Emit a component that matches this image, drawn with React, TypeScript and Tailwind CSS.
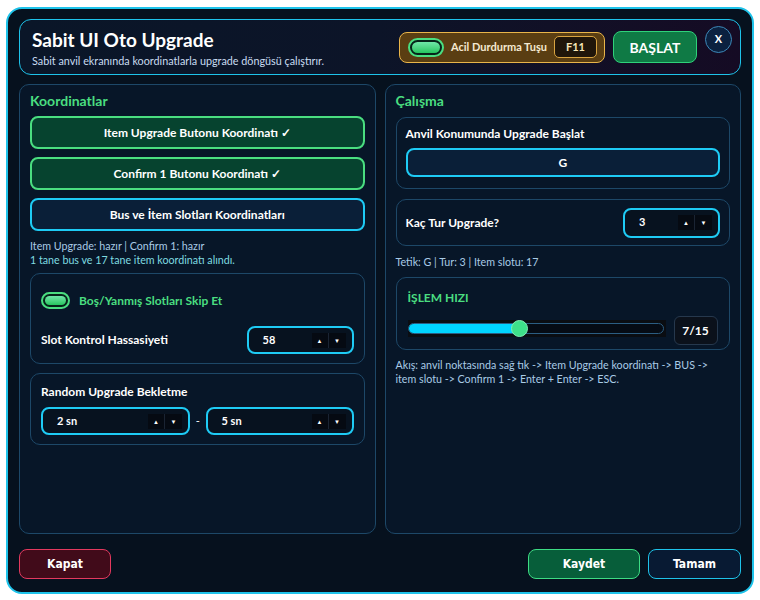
import React from "react";

const font = { fontFamily: "Lato, 'Noto Sans', sans-serif" };

function Toggle({ big }: { big?: boolean }) {
    return (
        <div
            className={`${big ? "w-[36px] h-[19px]" : "w-[29px] h-[17px]"} rounded-full border-2 border-[#4ade80] bg-[#06241a] p-[2px] flex`}
        >
            <div className="flex-1 rounded-full bg-gradient-to-b from-[#6ee7a8] to-[#22c55e]" />
        </div>
    );
}

function Spin({ value, className }: { value: string; className?: string }) {
    return (
        <div
            className={`h-[28px] rounded-[8px] border-2 border-[#1ecbf5] bg-[#07121f] flex items-center pl-[14px] pr-[6px] ${className ?? ""}`}
        >
            <span className="flex-1 text-[11px] font-bold text-white">{value}</span>
            <div className="flex h-[15px] bg-[#050a12]">
                <div className="w-[17px] flex items-center justify-center text-[6px] text-white border-r border-[#1a2433]">▲</div>
                <div className="w-[17px] flex items-center justify-center text-[6px] text-white">▼</div>
            </div>
        </div>
    );
}

function CoordButton({ text, done }: { text: string; done?: boolean }) {
    return (
        <div
            className={`h-[33px] rounded-[8px] border-2 flex items-center justify-center text-[12px] font-bold text-white ${done ? "border-[#4ade80] bg-[#06432f]" : "border-[#1ecbf5] bg-[#0a1f38]"}`}
        >
            {text}
        </div>
    );
}

export default function App(): React.JSX.Element {
    return (
        <div className="w-[760px] h-[600px] bg-white pt-[7px] pl-[6px]" style={font}>
            <div className="w-[748px] h-[587px] rounded-[16px] border-2 border-[#1ec3ea] bg-[#06111e] pt-[10px] px-[11px] flex flex-col">
                {/* header */}
                <div className="h-[56px] shrink-0 rounded-[12px] border border-[#1ec3ea] bg-gradient-to-r from-[#0a1628] via-[#0c1428] to-[#150b24] flex items-center pl-[12px] pr-[8px]">
                    <div className="flex-1">
                        <div className="text-[19px] font-bold text-white leading-[24px]">Sabit UI Oto Upgrade</div>
                        <div className="text-[10.8px] text-[#c9dcf0] mt-[2px] leading-[13px]">Sabit anvil ekranında koordinatlarla upgrade döngüsü çalıştırır.</div>
                    </div>
                    <div className="h-[31px] w-[206px] rounded-[8px] border border-[#e9b54a] bg-[#5a3e12] flex items-center pl-[8px] pr-[7px] gap-[7px]">
                        <Toggle big />
                        <span className="flex-1 text-[11px] font-bold text-[#f5e9d0]">Acil Durdurma Tuşu</span>
                        <div className="w-[43px] h-[22px] rounded-[5px] border border-[#d9a441] bg-[#20160a] flex items-center justify-center text-[11px] font-bold text-[#f8e7b8]">F11</div>
                    </div>
                    <div className="ml-[8px] w-[84px] h-[32px] rounded-[8px] border border-[#2fd27a] bg-[#0f7a45] flex items-center justify-center text-[14px] font-bold text-white">BAŞLAT</div>
                    <div className="ml-[8px] self-start mt-[6px] w-[27px] h-[27px] rounded-full border border-[#3d88b8] bg-[#0b2140] flex items-center justify-center text-[11px] font-bold text-white">X</div>
                </div>

                {/* panels */}
                <div className="mt-[9px] h-[450px] shrink-0 grid grid-cols-2 gap-[9px]">
                    <div className="rounded-[10px] border border-[#1d4868] bg-[#071628] pt-[7px] px-[10px] flex flex-col">
                        <div className="text-[14px] font-bold text-[#4ade80] leading-[18px]">Koordinatlar</div>
                        <div className="mt-[6px] flex flex-col gap-[8px]">
                            <CoordButton text="Item Upgrade Butonu Koordinatı ✓" done />
                            <CoordButton text="Confirm 1 Butonu Koordinatı ✓" done />
                            <CoordButton text="Bus ve İtem Slotları Koordinatları" />
                        </div>
                        <div className="mt-[8px] text-[10.7px] leading-[14px]">
                            <div className="text-[#a9cbe6]">Item Upgrade: hazır | Confirm 1: hazır</div>
                            <div className="text-[#7fdbe0]">1 tane bus ve 17 tane item koordinatı alındı.</div>
                        </div>
                        <div className="mt-[6px] h-[91px] rounded-[10px] border border-[#1d4868] pt-[18px] px-[10px]">
                            <div className="flex items-center gap-[9px] h-[17px]">
                                <Toggle />
                                <span className="text-[12px] font-bold text-[#4ade80]">Boş/Yanmış Slotları Skip Et</span>
                            </div>
                            <div className="mt-[17px] flex items-center">
                                <span className="flex-1 text-[12px] font-bold text-white">Slot Kontrol Hassasiyeti</span>
                                <Spin value="58" className="w-[107px]" />
                            </div>
                        </div>
                        <div className="mt-[9px] h-[72px] rounded-[10px] border border-[#1d4868] pt-[10px] px-[10px]">
                            <div className="text-[12px] font-bold text-white leading-[16px]">Random Upgrade Bekletme</div>
                            <div className="mt-[7px] flex items-center">
                                <Spin value="2 sn" className="w-[149px]" />
                                <span className="flex-1 text-center text-[11px] text-white">-</span>
                                <Spin value="5 sn" className="w-[148px]" />
                            </div>
                        </div>
                    </div>

                    <div className="rounded-[10px] border border-[#1d4868] bg-[#071628] pt-[7px] px-[10px] flex flex-col">
                        <div className="text-[14px] font-bold text-[#4ade80] leading-[18px]">Çalışma</div>
                        <div className="mt-[7px] h-[72px] rounded-[10px] border border-[#1d4868] pt-[8px] px-[9px]">
                            <div className="text-[12px] font-bold text-white leading-[16px]">Anvil Konumunda Upgrade Başlat</div>
                            <div className="mt-[6px] h-[29px] rounded-[8px] border-2 border-[#1ecbf5] bg-[#0a1f38] flex items-center justify-center text-[12px] font-bold text-white">G</div>
                        </div>
                        <div className="mt-[10px] h-[47px] rounded-[10px] border border-[#1d4868] px-[9px] flex items-center">
                            <span className="flex-1 text-[12px] font-bold text-white">Kaç Tur Upgrade?</span>
                            <Spin value="3" className="w-[97px] h-[30px]" />
                        </div>
                        <div className="mt-[9px] text-[10.7px] leading-[14px] text-[#a9cbe6]">Tetik: G | Tur: 3 | Item slotu: 17</div>
                        <div className="mt-[8px] h-[73px] rounded-[10px] border border-[#1d4868] pt-[12px] px-[11px]">
                            <div className="text-[12px] font-bold text-[#4ade80] leading-[16px]">İŞLEM HIZI</div>
                            <div className="mt-[10px] flex items-start">
                                <div className="mt-[4px] w-[258px] h-[17px] bg-[#0a0d12] flex items-center">
                                    <div className="relative w-[256px] h-[11px] rounded-full border border-[#2b5d82] bg-[#050b14]">
                                        <div className="h-full w-[112px] rounded-full bg-[#00d4ff]" />
                                        <div className="absolute left-[102px] top-[-4px] w-[17px] h-[17px] rounded-full bg-[#3ee08a] border border-[#7ff0b5]" />
                                    </div>
                                </div>
                                <div className="ml-[8px] w-[44px] h-[29px] rounded-[6px] border border-[#26384d] bg-[#0b111b] flex items-center justify-center text-[12px] font-bold text-white">7/15</div>
                            </div>
                        </div>
                        <div className="mt-[8px] text-[10.7px] leading-[14px] text-[#a9cbe6]">
                            Akış: anvil noktasında sağ tık -&gt; Item Upgrade koordinatı -&gt; BUS -&gt; item slotu -&gt; Confirm 1 -&gt; Enter + Enter -&gt; ESC.
                        </div>
                    </div>
                </div>

                {/* footer */}
                <div className="mt-[15px] flex items-center gap-[8px]" style={{ fontFamily: "'Liberation Sans Narrow', 'DejaVu Sans Condensed', sans-serif" }}>
                    <div className="w-[92px] h-[30px] rounded-[8px] border border-[#e2395e] bg-[#410b1a] flex items-center justify-center text-[12px] font-bold text-white">Kapat</div>
                    <div className="flex-1" />
                    <div className="w-[112px] h-[30px] rounded-[8px] border border-[#3ddc84] bg-[#075e3a] flex items-center justify-center text-[12px] font-bold text-white">Kaydet</div>
                    <div className="w-[93px] h-[30px] rounded-[8px] border border-[#1ec3ea] bg-[#081a33] flex items-center justify-center text-[12px] font-bold text-white">Tamam</div>
                </div>
            </div>
        </div>
    );
}
